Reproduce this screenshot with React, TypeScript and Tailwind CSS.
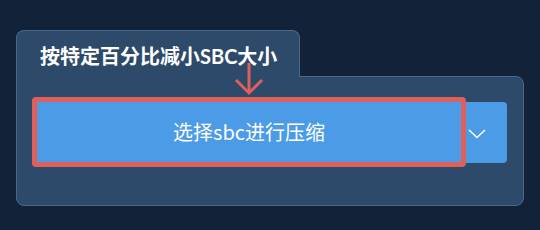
export default function App() {
  return (
    <div
      className="w-[540px] h-[230px] bg-[#112239] pt-[30px] px-4"
      style={{ fontFamily: 'Lato, "Noto Sans CJK SC", sans-serif' }}
    >
      <div className="relative z-10 -mb-px w-[284px] h-[47px] rounded-t-lg border border-b-0 border-[#4a6787] bg-[#2d4a6a] pl-[23px] pt-[15px]">
        <span className="text-[20px] font-bold leading-none text-white">
          按特定百分比减小SBC大小
        </span>
      </div>
      <div className="relative h-[130px] rounded-b-lg rounded-tr-lg border border-[#4a6787] bg-[#2d4a6a] px-[15px] pt-[20px]">
        <svg
          className="absolute z-20 left-[203px] top-[-14px]"
          width="58"
          height="34"
          viewBox="0 0 58 34"
          fill="none"
          stroke="#df605b"
          strokeWidth="3"
        >
          <path d="M29 0 V30" />
          <path d="M16 17 L29 30 L42 17" />
        </svg>
        <div className="flex">
          <div className="w-[434px] h-[70px] rounded-[4px] border-[5px] border-[#df605b] bg-[#4b9be6] flex items-center justify-center">
            <span
              className="text-[20px] text-white"
              style={{ fontFamily: '"Noto Sans CJK SC", sans-serif' }}
            >
              选择sbc进行压缩
            </span>
          </div>
          <div className="mt-[5px] w-[41px] h-[61px] rounded-r-[4px] bg-[#4b9be6]">
            <svg width="41" height="61" viewBox="0 0 41 61" fill="none" stroke="white" strokeWidth="1.6">
              <path d="M3 28 L11 35.5 L19 28" />
            </svg>
          </div>
        </div>
      </div>
    </div>
  );
}
